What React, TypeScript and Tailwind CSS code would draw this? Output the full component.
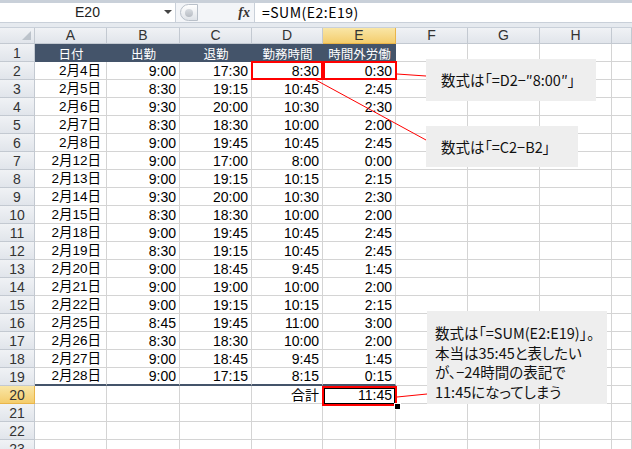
import React from 'react';

const colWidths = [72, 73, 72, 71, 73, 72, 72, 72, 20];
const colNames = ['A', 'B', 'C', 'D', 'E', 'F', 'G', 'H', ''];
const headers = ['日付', '出勤', '退勤', '勤務時間', '時間外労働'];

const rows: string[][] = [
  ['2月4日', '9:00', '17:30', '8:30', '0:30'],
  ['2月5日', '8:30', '19:15', '10:45', '2:45'],
  ['2月6日', '9:30', '20:00', '10:30', '2:30'],
  ['2月7日', '8:30', '18:30', '10:00', '2:00'],
  ['2月8日', '9:00', '19:45', '10:45', '2:45'],
  ['2月12日', '9:00', '17:00', '8:00', '0:00'],
  ['2月13日', '9:00', '19:15', '10:15', '2:15'],
  ['2月14日', '9:30', '20:00', '10:30', '2:30'],
  ['2月15日', '8:30', '18:30', '10:00', '2:00'],
  ['2月18日', '9:00', '19:45', '10:45', '2:45'],
  ['2月19日', '8:30', '19:15', '10:45', '2:45'],
  ['2月20日', '9:00', '18:45', '9:45', '1:45'],
  ['2月21日', '9:00', '19:00', '10:00', '2:00'],
  ['2月22日', '9:00', '19:15', '10:15', '2:15'],
  ['2月25日', '8:45', '19:45', '11:00', '3:00'],
  ['2月26日', '8:30', '18:30', '10:00', '2:00'],
  ['2月27日', '9:00', '18:45', '9:45', '1:45'],
  ['2月28日', '9:00', '17:15', '8:15', '0:15'],
  ['', '', '', '合計', '11:45'],
  ['', '', '', '', ''],
  ['', '', '', '', ''],
  ['', '', '', '', ''],
];

function RowHeader({ n, active }: { n: number; active?: boolean }) {
  return (
    <div
      className={`w-[35px] h-[18px] shrink-0 box-border border-r border-b flex items-center justify-center text-[14px] leading-[16px] text-[#333] font-['Liberation_Sans',sans-serif] ${
        active
          ? 'bg-gradient-to-b from-[#f9e6a6] to-[#f4cd6c] border-[#e9b54a]'
          : 'bg-gradient-to-b from-[#f0f2f5] to-[#e1e5eb] border-[#c3c9d1]'
      }`}
    >
      {n}
    </div>
  );
}

export default function App() {
  return (
    <div className="relative w-[632px] h-[449px] overflow-hidden bg-white font-['Noto_Sans_CJK_JP',sans-serif]">
      {/* Formula bar */}
      <div className="h-[23px] flex bg-white border-t-[3px] border-b border-[#c9d0d9] box-border">
        <div className="relative w-[175px] flex items-center justify-center text-[14px] text-[#222] font-['Liberation_Sans',sans-serif]">
          E20
          <div className="absolute right-[3px] top-[7px] w-0 h-0 border-l-[4px] border-r-[4px] border-t-[4px] border-l-transparent border-r-transparent border-t-[#444]" />
        </div>
        <div className="w-[80px] flex items-center bg-[#f3f5f8] border-l border-r border-[#c9d0d9]">
          <div className="ml-[4px] w-[18px] h-[17px] rounded-l-full border border-[#b9c0c9] bg-gradient-to-b from-[#ffffff] to-[#dfe3e8] flex items-center justify-center">
            <div className="w-[8px] h-[8px] rounded-full bg-gradient-to-b from-[#d8dce1] to-[#b7bcc3]" />
          </div>
          <div className="ml-auto mr-[4px] text-[14px] italic font-bold font-['Liberation_Serif',serif] text-[#333]">fx</div>
        </div>
        <div className="flex-1 flex items-center pl-[7px] text-[14px] text-black tracking-[0.5px]">
          =SUM(E2:E19)
        </div>
      </div>
      <div className="h-[4px] bg-[#e6eaef] border-b border-[#c9d0d9] box-content" />

      {/* Column headers */}
      <div className="flex h-[16px]">
        <div className="relative w-[35px] h-[16px] box-border border-r border-b border-[#c3c9d1] bg-gradient-to-b from-[#f0f2f5] to-[#e1e5eb]">
          <div className="absolute right-[3px] bottom-[3px] w-0 h-0 border-b-[9px] border-l-[9px] border-l-transparent border-b-[#bcc3cb]" />
        </div>
        {colNames.map((c, i) => (
          <div
            key={i}
            style={{ width: colWidths[i] }}
            className={`h-[16px] shrink-0 box-border border-r border-b flex items-center justify-center text-[14px] leading-[15px] text-[#333] font-['Liberation_Sans',sans-serif] ${
              c === 'E'
                ? 'bg-gradient-to-b from-[#f9e6a6] to-[#f4cd6c] border-[#e9b54a]'
                : 'bg-gradient-to-b from-[#f0f2f5] to-[#e1e5eb] border-[#c3c9d1]'
            }`}
          >
            {c}
          </div>
        ))}
      </div>

      {/* Row 1: table header */}
      <div className="flex">
        <RowHeader n={1} />
        {colWidths.map((w, i) => (
          <div
            key={i}
            style={{ width: w }}
            className={`h-[18px] shrink-0 box-border flex items-end justify-center leading-[16px] text-[12.5px] ${
              i < 5 ? 'bg-[#44546a] text-white' : 'border-r border-b border-[#d4d4d4]'
            }`}
          >
            {i < 5 ? headers[i] : ''}
          </div>
        ))}
      </div>

      {/* Data rows */}
      {rows.map((r, ri) => (
        <div key={ri} className="flex">
          <RowHeader n={ri + 2} active={ri === 18} />
          {colWidths.map((w, i) => (
            <div
              key={i}
              style={{ width: w }}
              className={`h-[18px] shrink-0 box-border border-r flex items-end justify-end leading-[16px] text-black font-['Liberation_Sans','Noto_Sans_CJK_JP',sans-serif] ${
                i === 0 ? 'pr-[5px] text-[13.5px]' : 'pr-[3px] text-[14px]'
              } ${ri === 17 && i < 5 ? 'border-b-2 border-b-[#44546a] border-r-[#d4d4d4]' : 'border-b border-[#d4d4d4]'}`}
            >
              {i < 5 ? r[i] : ''}
            </div>
          ))}
        </div>
      ))}

      {/* Red highlight boxes */}
      <div className="absolute left-[251px] top-[61px] w-[72px] h-[19px] border-2 border-[#ff0000]" />
      <div className="absolute left-[323px] top-[61px] w-[74px] h-[19px] border-2 border-[#ff0000]" />
      <div className="absolute left-[322px] top-[386px] w-[75px] h-[20px] border-2 border-[#ff0000]">
        <div className="w-full h-full border border-black" />
      </div>
      <div className="absolute left-[394px] top-[403px] w-[5px] h-[5px] bg-black border border-white box-content" />

      {/* Callout lines */}
      <svg className="absolute left-0 top-0 pointer-events-none" width="632" height="449">
        <line x1="397" y1="74" x2="426" y2="76" stroke="#ff0000" strokeWidth="1" />
        <line x1="314" y1="79" x2="426" y2="140" stroke="#ff0000" strokeWidth="1" />
        <line x1="397" y1="397" x2="427" y2="394" stroke="#ff0000" strokeWidth="1" />
      </svg>

      {/* Callouts */}
      <div className="absolute left-[426px] top-[59px] w-[170px] h-[42px] bg-[#eeeeee] flex items-center pl-[15px] text-[14.5px] text-[#111] [font-feature-settings:'palt']">
        数式は「=D2−″8:00″」
      </div>
      <div className="absolute left-[426px] top-[126px] w-[152px] h-[41px] bg-[#eeeeee] flex items-center pl-[15px] text-[14.5px] text-[#111] [font-feature-settings:'palt']">
        数式は「=C2−B2」
      </div>
      <div className="absolute left-[427px] top-[311px] w-[180px] h-[93px] bg-[#eeeeee] pl-[8px] pt-[12px] text-[14.5px] leading-[19.5px] text-[#111] [font-feature-settings:'palt']">
        <div>数式は「=SUM(E2:E19)」。</div>
        <div>本当は35:45と表したい</div>
        <div>が、−24時間の表記で</div>
        <div>11:45になってしまう</div>
      </div>
    </div>
  );
}
